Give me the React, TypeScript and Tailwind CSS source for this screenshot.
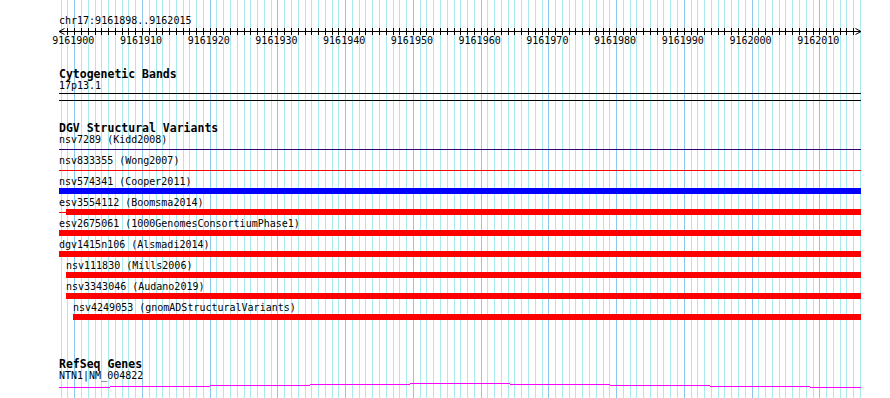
import React from "react";

const LEFT = 60.7;
const STEP = 6.773;
const START = 9161898;

const baseX = (k: number) => LEFT + STEP * k;

function Guidelines() {
  const lines = [];
  for (let k = 0; k <= 118; k++) {
    const major = (START + k) % 10 === 0;
    lines.push(
      <line
        key={k}
        x1={Math.round(baseX(k)) + 0.5}
        x2={Math.round(baseX(k)) + 0.5}
        y1={0}
        y2={398}
        stroke={major ? "#8cc8ee" : "#a8eaee"}
        strokeWidth={1}
      />
    );
  }
  return (
    <svg
      className="absolute inset-0 pointer-events-none"
      width={890}
      height={398}
      shapeRendering="crispEdges"
    >
      {lines}
    </svg>
  );
}

function Ruler() {
  const ticks = [];
  for (let k = 1; k <= 117; k++) {
    const x = Math.round(baseX(k)) + 0.5;
    ticks.push(<line key={k} x1={x} x2={x} y1={1} y2={8} stroke="#000" />);
  }
  const labels = [];
  for (let i = 0; i < 12; i++) {
    const k = 2 + i * 10;
    labels.push(
      <text key={i} x={baseX(k) - 1} y={17} textAnchor="middle">
        {START + k}
      </text>
    );
  }
  return (
    <svg
      className="block"
      width={890}
      height={20}
      fontFamily="'DejaVu Sans Mono', monospace"
      fontSize={10}
      fill="#000"
    >
      <g shapeRendering="crispEdges">
        <line x1={59} x2={861} y1={4.5} y2={4.5} stroke="#000" />
        {ticks}
      </g>
      <polyline points="64.5,1.5 59,4.5 64.5,7.5" fill="none" stroke="#000" />
      <polyline points="855.5,1.5 861,4.5 855.5,7.5" fill="none" stroke="#000" />
      {labels}
    </svg>
  );
}

type Variant = {
  label: string;
  indent: string;
  kind: "thin" | "thick" | "partial";
  color: string;
};

const variants: Variant[] = [
  { label: "nsv7289 (Kidd2008)", indent: "pl-0", kind: "thin", color: "bg-[#330077]" },
  { label: "nsv833355 (Wong2007)", indent: "pl-0", kind: "thin", color: "bg-[#ff0000]" },
  { label: "nsv574341 (Cooper2011)", indent: "pl-0", kind: "thick", color: "bg-[#0000ff]" },
  { label: "esv3554112 (Boomsma2014)", indent: "pl-0", kind: "partial", color: "bg-[#ff0000]" },
  { label: "esv2675061 (1000GenomesConsortiumPhase1)", indent: "pl-0", kind: "thick", color: "bg-[#ff0000]" },
  { label: "dgv1415n106 (Alsmadi2014)", indent: "pl-0", kind: "thick", color: "bg-[#ff0000]" },
  { label: "nsv111830 (Mills2006)", indent: "pl-[7px]", kind: "thick", color: "bg-[#ff0000]" },
  { label: "nsv3343046 (Audano2019)", indent: "pl-[7px]", kind: "thick", color: "bg-[#ff0000]" },
  { label: "nsv4249053 (gnomADStructuralVariants)", indent: "pl-[14px]", kind: "thick", color: "bg-[#ff0000]" },
];

function VariantRow({ v }: { v: Variant }) {
  return (
    <div className="h-[21px] flex flex-col">
      <div className={`h-[11px] leading-[10px] whitespace-nowrap ${v.indent}`}>{v.label}</div>
      {v.kind === "thin" && (
        <div className="h-[6px] flex items-center">
          <div className={`h-px w-full ${v.color}`} />
        </div>
      )}
      {v.kind === "thick" && (
        <div className={v.indent}>
          <div className={`h-[6px] w-full ${v.color}`} />
        </div>
      )}
      {v.kind === "partial" && (
        <div className="h-[6px] flex items-center">
          <div className={`h-px w-[7px] ${v.color}`} />
          <div className={`h-[6px] flex-1 ${v.color}`} />
        </div>
      )}
    </div>
  );
}

const geneSteps = [
  { w: 51, y: 5 },
  { w: 100, y: 4 },
  { w: 100, y: 3 },
  { w: 100, y: 2 },
  { w: 100, y: 1 },
  { w: 100, y: 2 },
  { w: 100, y: 3 },
  { w: 100, y: 4 },
  { w: 51, y: 5 },
];

function GeneLine() {
  let x = 0;
  return (
    <svg className="block" width={802} height={7} shapeRendering="crispEdges">
      {geneSteps.map((s, i) => {
        const r = <rect key={i} x={x} y={s.y} width={s.w} height={1} fill="#ff00ff" />;
        x += s.w;
        return r;
      })}
    </svg>
  );
}

export default function App() {
  return (
    <div className="relative w-[890px] h-[398px] overflow-hidden bg-white text-black font-['DejaVu_Sans_Mono',monospace] text-[10px]">
      <Guidelines />
      <div className="relative">
        <div className="pt-[15px] pl-[59px] leading-[12px]">chr17:9161898..9162015</div>
        <Ruler />

        <div className="mt-[21px] pl-[59px] w-[861px]">
          <div className="text-[11.5px] font-bold leading-[12px]">Cytogenetic Bands</div>
          <div className="leading-[12px]">17p13.1</div>
          <div className="mt-px h-px bg-black" />
          <div className="mt-[6px] h-px bg-black" />
        </div>

        <div className="mt-[21px] pl-[59px] w-[861px]">
          <div className="text-[11.5px] font-bold leading-[12px]">DGV Structural Variants</div>
          <div className="mt-px">
            {variants.map((v) => (
              <VariantRow key={v.label} v={v} />
            ))}
          </div>
        </div>

        <div className="mt-[34px] pl-[59px] w-[861px]">
          <div className="text-[11.5px] font-bold leading-[12px]">RefSeq Genes</div>
          <div className="leading-[12px]">NTN1|NM_004822</div>
          <GeneLine />
        </div>
      </div>
    </div>
  );
}
